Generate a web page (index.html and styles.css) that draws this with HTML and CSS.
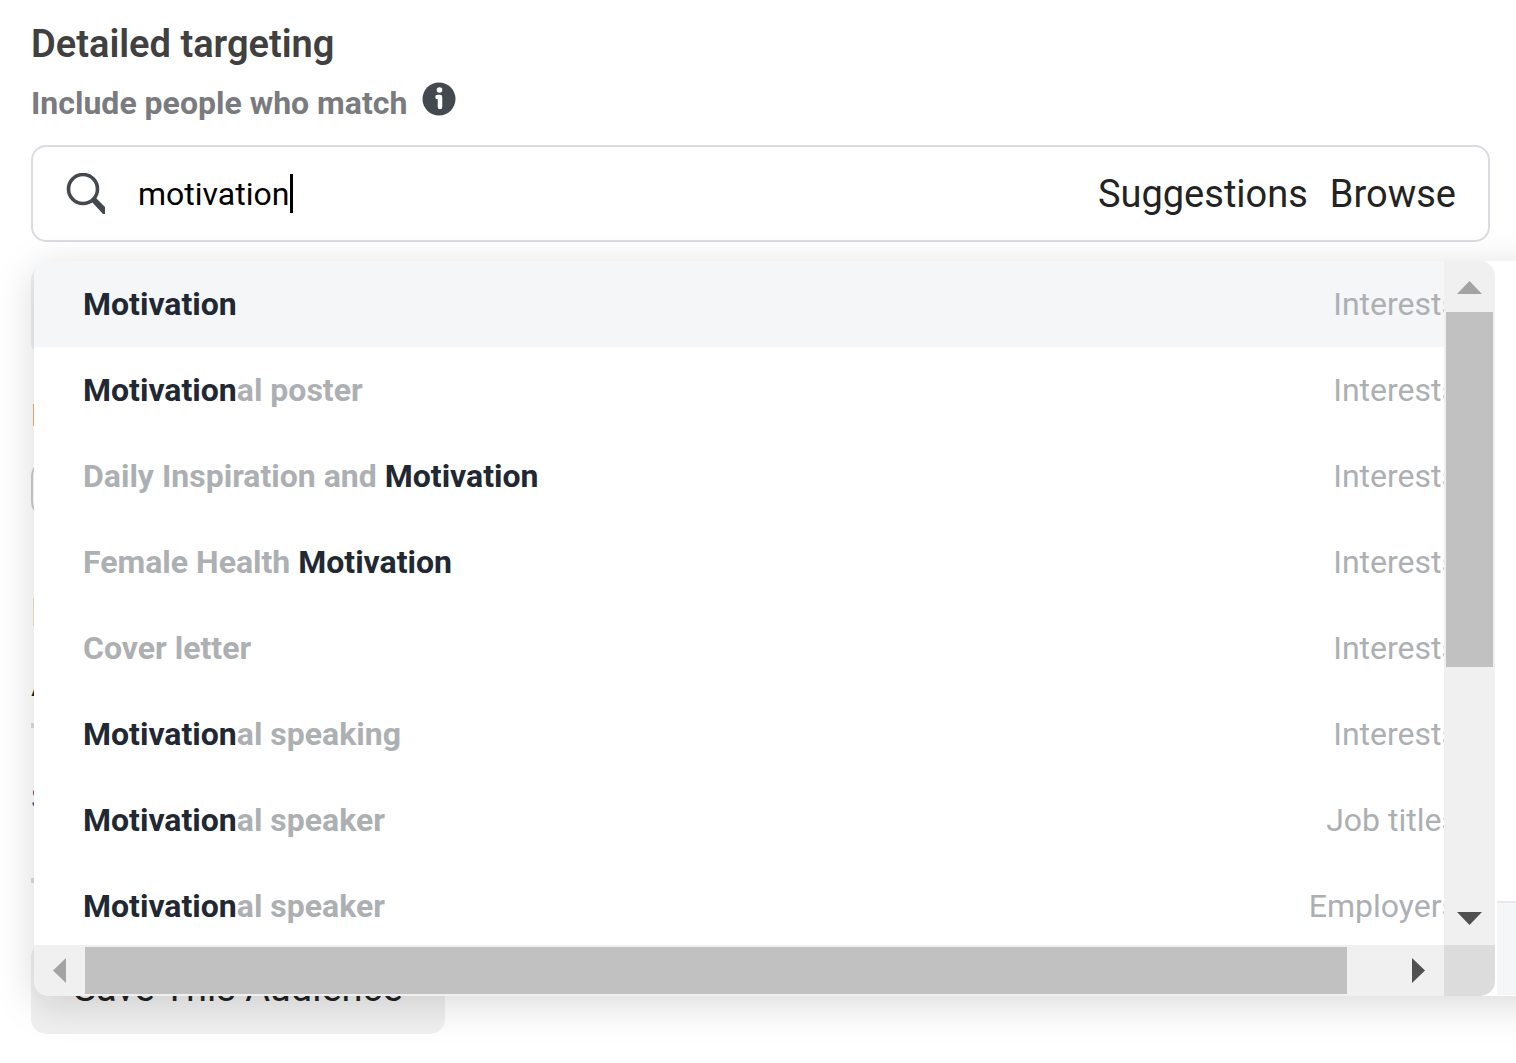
FILE: index.html
```html
<!DOCTYPE html>
<html lang="en">
<head>
  <meta charset="UTF-8">
  <meta name="viewport" content="width=device-width, initial-scale=1.0">
  <title>Detailed targeting</title>
  <link rel="stylesheet" href="styles.css">
</head>
<body>
  <main class="targeting">
    <h1>Detailed targeting</h1>
    <div class="sub">
      <label for="search">Include people who match</label>
      <svg class="info" viewBox="0 0 34 34" aria-hidden="true">
        <circle cx="17" cy="17" r="16.5" fill="#444950"/>
        <circle cx="17.5" cy="8" r="2.8" fill="#fff"/>
        <path d="M15.500 15h2.500v10" fill="none" stroke="#fff" stroke-width="4.500" stroke-linejoin="round" stroke-linecap="round"/>
      </svg>
    </div>

    <!-- Search field with its dropdown -->
    <div class="search">
      <div class="field">
        <svg class="glass" viewBox="0 0 40 42" aria-hidden="true">
          <circle cx="17" cy="16" r="14.5" fill="none" stroke="#444950" stroke-width="3.6"/>
          <path d="M25 28l4-4L39 34v7h-2z" fill="#444950"/>
        </svg>
        <input type="text" id="search" value="motivation" autocomplete="off">
        <span class="caret"></span>
        <div class="actions">
          <button type="button">Suggestions</button>
          <button type="button">Browse</button>
        </div>
      </div>

      <div class="popup">
        <div class="list">
          <div class="view">
            <ul class="options">
              <li class="active"><span><b>Motivation</b></span><em>Interests</em></li>
              <li><span><b>Motivation</b>al poster</span><em>Interests</em></li>
              <li><span>Daily Inspiration and <b>Motivation</b></span><em>Interests</em></li>
              <li><span>Female Health <b>Motivation</b></span><em>Interests</em></li>
              <li><span>Cover letter</span><em>Interests</em></li>
              <li><span><b>Motivation</b>al speaking</span><em>Interests</em></li>
              <li><span><b>Motivation</b>al speaker</span><em>Job titles</em></li>
              <li><span><b>Motivation</b>al speaker</span><em>Employers</em></li>
            </ul>
          </div>
          <div class="bar vertical">
            <svg class="arrow" viewBox="0 0 51 51"><path d="M38 33H13L25.500 20z" fill="#a3a3a3"/></svg>
            <div class="track"><div class="thumb"></div></div>
            <svg class="arrow" viewBox="0 0 51 51"><path d="M13 18h25L25.500 31z" fill="#505050"/></svg>
          </div>
          <div class="bar horizontal">
            <svg class="arrow" viewBox="0 0 51 51"><path d="M32 13v25L19 25.500z" fill="#a3a3a3"/></svg>
            <div class="track"><div class="thumb"></div></div>
            <svg class="arrow" viewBox="0 0 51 51"><path d="M19 13v25l13-12.500z" fill="#505050"/></svg>
          </div>
          <div class="corner"></div>
        </div>
        <div class="details"><div class="details-footer"></div></div>
      </div>
    </div>

    <!-- Rest of the form, under the dropdown -->
    <button type="button" class="gray narrow">Exclude</button>
    <h2>Languages</h2>
    <div class="box"></div>
    <p class="muted">Life events</p>
    <p class="place">Advanced</p>
    <hr>
    <p class="saved">Saved audience</p>
    <hr>
    <button type="button" class="gray save">Save This Audience</button>
  </main>
</body>
</html>
```
FILE: styles.css
```css
* {
  box-sizing: border-box;
}
html {
  overflow-x: hidden;
}
body {
  margin: 0;
  background: #fff;
  font-family: Roboto, "Liberation Sans", sans-serif;
  font-size: 32px;
  line-height: 40px;
  color: #1c1e21;
}
h1, h2, p, ul {
  margin: 0;
  padding: 0;
}
button {
  border: none;
  background: none;
  padding: 0;
  font-family: inherit;
  font-size: 38px;
  line-height: 48px;
  color: #232323;
  cursor: pointer;
}
.targeting {
  padding: 20px 26px 0 31px;
  overflow: hidden;
}
h1 {
  font-size: 38px;
  line-height: 48px;
  font-weight: 600;
  color: #404040;
}
.sub {
  display: flex;
  align-items: flex-start;
  gap: 15px;
  margin: 14px 0 21px;
  font-weight: 700;
  color: #7a7b7f;
}
.sub label {
  line-height: 42px;
}
.info {
  width: 34px;
  height: 34px;
}

/* Search field */
.search {
  position: relative;
}
.field {
  display: flex;
  align-items: center;
  height: 97px;
  padding: 0 32px 0 33px;
  border: 2px solid #d9dde2;
  border-radius: 15px;
  background: #fff;
}
.glass {
  width: 40px;
  height: 42px;
}
.field input {
  width: 152px;
  margin-left: 32px;
  padding: 0;
  border: none;
  outline: none;
  background: none;
  font: inherit;
  color: #000;
  caret-color: transparent;
}
.caret {
  width: 3px;
  height: 39px;
  background: #000;
}
.actions {
  display: flex;
  gap: 22px;
  margin-left: auto;
}

/* Dropdown, runs out past the right edge */
.popup {
  position: absolute;
  z-index: 10;
  top: 116px;
  left: 3px;
  right: -400px;
  display: grid;
  grid-template-columns: 1fr 395px;
  background: #fff;
  border-radius: 15px;
  box-shadow: 0 8px 40px rgba(0, 0, 0, 0.15);
}
.list {
  display: grid;
  grid-template-columns: 1fr 51px;
  grid-template-rows: 684px 51px;
  border-radius: 15px;
  overflow: hidden;
}
.view {
  overflow: hidden;
}
.options {
  width: calc(100% + 64px);
  list-style: none;
}
.options li {
  display: flex;
  justify-content: space-between;
  align-items: center;
  height: 86px;
  padding: 0 50px 0 49px;
  font-weight: 700;
  color: #adb0b3;
}
.options .active {
  background: #f5f6f8;
}
.options b {
  font-weight: 700;
  color: #1f2833;
}
.options em {
  font-style: normal;
  font-weight: 400;
}
.bar {
  display: flex;
  background: #f0f0f0;
}
.vertical {
  flex-direction: column;
}
.arrow {
  flex: none;
  width: 51px;
  height: 51px;
}
.track {
  flex: 1;
}
.thumb {
  background: #c1c1c1;
}
.vertical .thumb {
  width: 47px;
  height: 61%;
  margin: 0 auto;
}
.horizontal .thumb {
  width: calc(100% - 46px);
  height: 47px;
  margin-top: 2px;
}
.corner {
  background: #dcdcdc;
}
.details {
  display: flex;
  align-items: flex-end;
  padding: 0 0 1px 2px;
}
.details-footer {
  flex: 1;
  height: 94px;
  border-top: 2px solid #e7e8ea;
  background: #f5f6f8;
}

/* Form below */
.gray {
  display: block;
  border-radius: 15px;
  background: #f0f0f0;
}
.narrow {
  width: 300px;
  height: 92px;
  margin-top: 23px;
}
h2 {
  margin-top: 38px;
  font-size: 32px;
  line-height: 40px;
  font-weight: 400;
  color: #404040;
}
.box {
  height: 56px;
  margin-top: 26px;
  border: 2px solid #ccc;
  border-radius: 15px;
}
.muted {
  margin-top: 72px;
  font-size: 38px;
  line-height: 48px;
  font-weight: 600;
  color: #bbb;
}
.place {
  margin-top: 28px;
}
hr {
  height: 5px;
  margin: 18px 0 0;
  border: none;
  background: #dadde1;
}
.saved {
  margin: 50px 0 60px;
  color: #385898;
}
.save {
  width: 414px;
  height: 92px;
  margin-top: 59px;
  margin-bottom: 40px;
}
```
